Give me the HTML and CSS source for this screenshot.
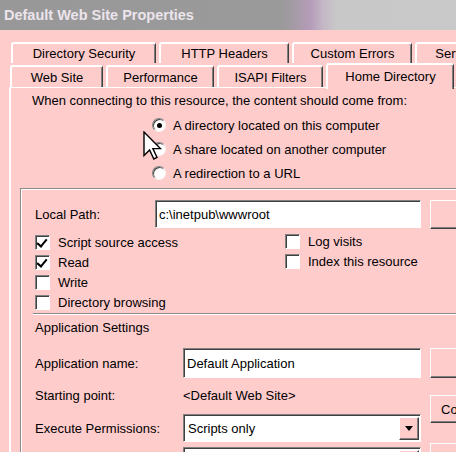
FILE: index.html
```html
<!DOCTYPE html>
<html lang="en">
<head>
<meta charset="utf-8">
<title>Default Web Site Properties</title>
<link rel="stylesheet" href="styles.css">
</head>
<body>
<div class="window">
  <div class="titlebar">Default Web Site Properties</div>

  <div class="tabs">
    <div class="tabrow row1">
      <div class="tab t-dirsec">Directory Security</div>
      <div class="tab t-http">HTTP Headers</div>
      <div class="tab t-custom">Custom Errors</div>
      <div class="tab t-server">Server Extensions</div>
    </div>
    <div class="tabrow row2">
      <div class="tab t-website">Web Site</div>
      <div class="tab t-perf">Performance</div>
      <div class="tab t-isapi">ISAPI Filters</div>
      <div class="tab t-home active">Home Directory</div>
    </div>
  </div>

  <div class="panel">
    <p class="intro">When connecting to this resource, the content should come from:</p>
    <div class="radios">
      <div class="radio-row"><span class="radio checked"></span><span class="rlabel">A directory located on this computer</span></div>
      <div class="radio-row"><span class="radio"></span><span class="rlabel">A share located on another computer</span></div>
      <div class="radio-row"><span class="radio"></span><span class="rlabel">A redirection to a URL</span></div>
    </div>

    <div class="group">
      <div class="path-row">
        <span class="lbl lbl-path">Local Path:</span>
        <div class="textbox tb-path">c:\inetpub\wwwroot</div>
        <div class="btn btn-side"></div>
      </div>

      <div class="checks">
        <div class="check-col col-left">
          <div class="check-row"><span class="cbox checked"></span><span class="clabel">Script source access</span></div>
          <div class="check-row"><span class="cbox checked"></span><span class="clabel">Read</span></div>
          <div class="check-row"><span class="cbox"></span><span class="clabel">Write</span></div>
          <div class="check-row"><span class="cbox"></span><span class="clabel">Directory browsing</span></div>
        </div>
        <div class="check-col col-right">
          <div class="check-row"><span class="cbox"></span><span class="clabel">Log visits</span></div>
          <div class="check-row"><span class="cbox"></span><span class="clabel">Index this resource</span></div>
        </div>
      </div>

      <div class="sep"></div>
      <div class="app-title">Application Settings</div>

      <div class="app">
        <div class="app-fields">
          <div class="app-row row-name">
            <span class="lbl lbl-app">Application name:</span>
            <div class="textbox tb-app">Default Application</div>
          </div>
          <div class="app-row row-start">
            <span class="lbl lbl-app">Starting point:</span>
            <span class="value">&lt;Default Web Site&gt;</span>
          </div>
          <div class="app-row row-exec">
            <span class="lbl lbl-app">Execute Permissions:</span>
            <div class="select">
              <span class="select-text">Scripts only</span>
              <span class="drop"><span class="arrow"></span></span>
            </div>
          </div>
          <div class="app-row row-prot">
            <span class="lbl lbl-app"></span>
            <div class="select">
              <span class="select-text"></span>
              <span class="drop"><span class="arrow"></span></span>
            </div>
          </div>
        </div>
        <div class="app-buttons">
          <div class="btn btn-side b-remove"></div>
          <div class="btn btn-side b-config">Configuration...</div>
          <div class="btn btn-side b-unload"></div>
        </div>
      </div>
    </div>
  </div>

  <svg class="cursor" width="20" height="30" viewBox="0 0 20 30" aria-hidden="true">
    <path d="M1 1 L1 24.5 L6.6 19 L10.8 28 L14 26.4 L9.9 17.6 L17.4 17.6 Z" fill="#fff" stroke="#000" stroke-width="1.4" stroke-linejoin="miter"/>
  </svg>
</div>
</body>
</html>
```

FILE: styles.css
```css
* { box-sizing: border-box; }

html, body {
  margin: 0;
  padding: 0;
}

body {
  width: 456px;
  height: 452px;
  overflow: hidden;
  background: #ffcccc;
  font-family: "Liberation Sans", Arial, sans-serif;
  font-size: 13px;
  color: #000;
}

.window {
  position: relative;
  width: 600px;
}

.titlebar {
  width: 456px;
  height: 30px;
  padding-left: 4px;
  line-height: 30px;
  font-size: 14.5px;
  font-weight: bold;
  color: #ece4ec;
  background: linear-gradient(to right, #989898 0%, #9a9a9a 62%, #b49cb8 68%, #c4b8c6 71%, #c8c8c8 74%, #c9c9c9 100%);
  white-space: nowrap;
}

/* ---------- tabs ---------- */
.tabs {
  margin-top: 12px;
  position: relative;
  z-index: 2;
}

.tabrow {
  display: flex;
  gap: 3px;
}

.row1 {
  height: 21px;
  padding-left: 11px;
}

.row2 {
  height: 24px;
  padding-left: 10px;
  align-items: flex-end;
}

.tab {
  flex: none;
  display: flex;
  align-items: center;
  justify-content: center;
  white-space: nowrap;
  background: #ffcccc;
  border-top: 2px solid #fff;
  border-left: 2px solid #fff;
  border-right: 1px solid #404040;
  box-shadow: inset -1px 0 #808080;
  border-radius: 3px 3px 0 0;
}

.row1 .tab { height: 21px; }
.row2 .tab { height: 22px; }

.t-dirsec { width: 145px; }
.t-http { width: 130px; }
.t-custom { width: 120px; }
.t-server { width: 145px; }

.t-website { width: 93px; }
.t-perf { width: 108px; }
.t-isapi { width: 106px; }
.t-home { width: 128px; }

.row2 .tab.active {
  height: 26px;
  margin-bottom: -2px;
  padding-bottom: 2px;
}

/* ---------- panel ---------- */
.panel {
  margin-left: 9px;
  height: 400px;
  border-top: 1px solid #fff;
  border-left: 2px solid #fff;
  position: relative;
  z-index: 1;
}

.intro {
  margin: 0;
  padding: 5px 0 0 21px;
  line-height: 16px;
  white-space: nowrap;
}

.radios {
  margin-top: 4px;
  padding-left: 141px;
}

.radio-row {
  height: 24px;
  display: flex;
  align-items: center;
}

.radio {
  flex: none;
  width: 14px;
  height: 14px;
  border-radius: 50%;
  background: #fff;
  border: 1px solid;
  border-color: #808080 #f4f4f4 #f4f4f4 #808080;
  box-shadow: inset 1px 1px #404040;
  display: flex;
  align-items: center;
  justify-content: center;
}

.radio.checked::after {
  content: "";
  width: 5px;
  height: 5px;
  border-radius: 50%;
  background: #000;
}

.rlabel {
  margin-left: 7px;
  white-space: nowrap;
}

/* ---------- group box ---------- */
.group {
  margin-top: 3px;
  margin-left: 9px;
  width: 560px;
  height: 320px;
  padding: 11px 0 0 14px;
  border: 1px solid #8a8a8a;
  box-shadow: inset 1px 1px #fff, 1px 1px #fff;
}

.lbl {
  flex: none;
  white-space: nowrap;
}

.lbl-path { width: 120px; }
.lbl-app { width: 148px; }

.path-row {
  display: flex;
  align-items: center;
  height: 28px;
}

.textbox {
  flex: none;
  height: 28px;
  display: flex;
  align-items: center;
  padding-left: 3px;
  background: #fff;
  border: 1px solid;
  border-color: #808080 #fff #fff #808080;
  box-shadow: inset 1px 1px #404040;
  white-space: nowrap;
}

.tb-path { width: 266px; }
.tb-app { width: 238px; height: 30px; }

.btn {
  flex: none;
  display: flex;
  align-items: center;
  justify-content: center;
  background: #ffcccc;
  border: 1px solid;
  border-color: #fff #404040 #404040 #fff;
  box-shadow: inset -1px -1px #808080;
  white-space: nowrap;
}

.btn-side {
  width: 112px;
  height: 29px;
  margin-left: 9px;
}

/* ---------- checkboxes ---------- */
.checks {
  display: flex;
  margin-top: 4px;
}

.col-left { width: 250px; }
.col-right { margin-top: -1px; }

.check-row {
  height: 20px;
  display: flex;
  align-items: center;
}

.cbox {
  flex: none;
  width: 15px;
  height: 15px;
  background: #fff;
  border: 1px solid;
  border-color: #808080 #fff #fff #808080;
  box-shadow: inset 1px 1px #404040;
  position: relative;
}

.cbox.checked::after {
  content: "";
  position: absolute;
  left: 3px;
  top: 1px;
  width: 4px;
  height: 8px;
  border-right: 2px solid #000;
  border-bottom: 2px solid #000;
  transform: rotate(40deg);
  transform-origin: 50% 50%;
}

.clabel {
  margin-left: 8px;
  white-space: nowrap;
}

.sep {
  margin-top: 1px;
  margin-left: -2px;
  height: 2px;
  border-top: 1px solid #8a8a8a;
  border-bottom: 1px solid #fff;
}

.app-title {
  margin-top: 5px;
  line-height: 16px;
}

/* ---------- application settings ---------- */
.app {
  display: flex;
  align-items: flex-start;
}

.app-fields {
  width: 386px;
  flex: none;
}

.app-row {
  display: flex;
  align-items: center;
  height: 28px;
}

.row-name { margin-top: 12px; height: 30px; }
.row-start { margin-top: 3px; }
.row-exec { margin-top: 5px; }
.row-prot { margin-top: 5px; }

.value { white-space: nowrap; }

.select {
  flex: none;
  width: 238px;
  height: 28px;
  display: flex;
  align-items: stretch;
  background: #fff;
  border: 1px solid;
  border-color: #808080 #fff #fff #808080;
  box-shadow: inset 1px 1px #404040;
  padding: 1px;
}

.select-text {
  flex: 1;
  display: flex;
  align-items: center;
  padding-left: 3px;
  white-space: nowrap;
}

.drop {
  flex: none;
  width: 20px;
  margin-top: 1px;
  background: #ffcccc;
  border: 1px solid;
  border-color: #fff #404040 #404040 #fff;
  box-shadow: inset -1px -1px #808080;
  display: flex;
  align-items: center;
  justify-content: center;
}

.arrow {
  width: 0;
  height: 0;
  border-left: 4px solid transparent;
  border-right: 4px solid transparent;
  border-top: 5px solid #000;
}

.app-buttons {
  display: flex;
  flex-direction: column;
}

.b-remove { margin-top: 12px; height: 30px; }
.b-config {
  margin-top: 17px;
  height: 28px;
  justify-content: flex-start;
  padding-left: 10px;
}
.b-unload { margin-top: 20px; }

/* ---------- mouse pointer ---------- */
.cursor {
  position: absolute;
  left: 143px;
  top: 131px;
  z-index: 5;
}
```
